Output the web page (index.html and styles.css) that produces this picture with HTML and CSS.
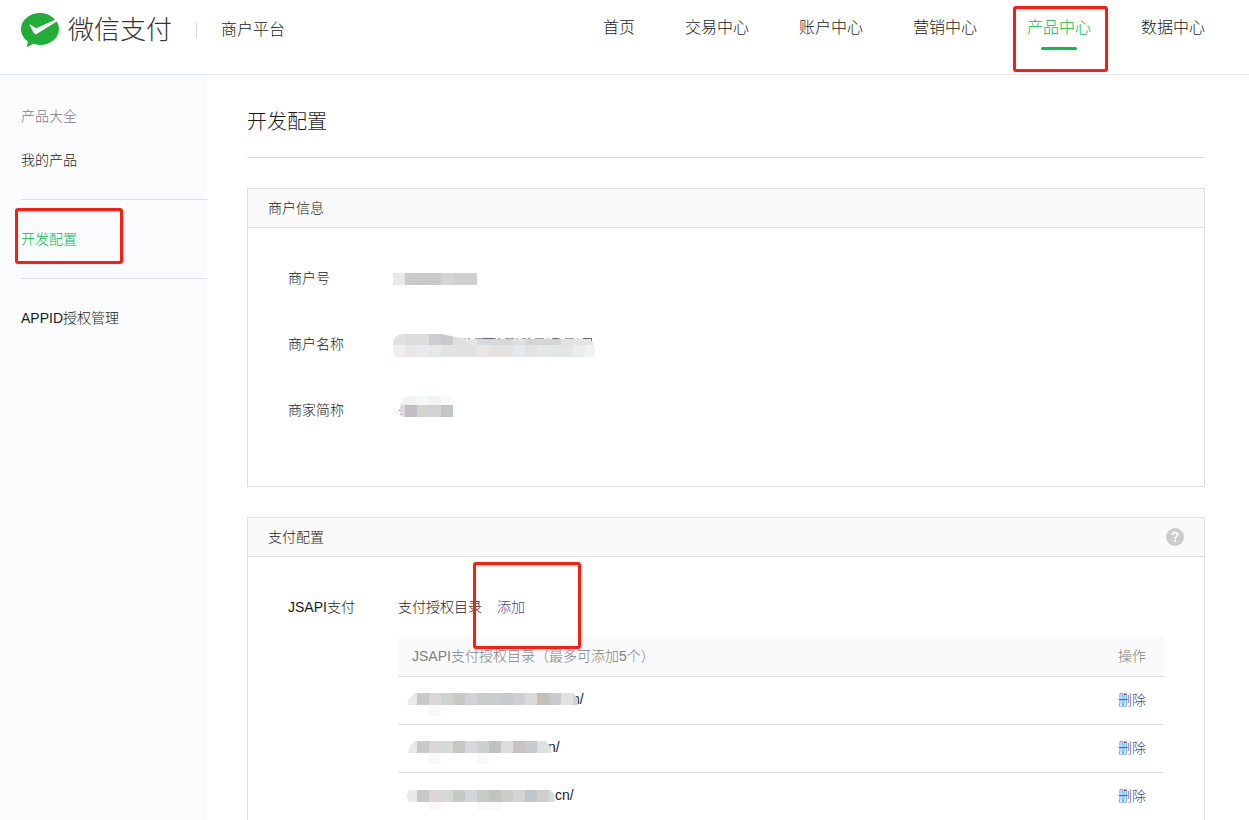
FILE: index.html
```html
<!DOCTYPE html>
<html lang="zh-CN">
<head>
    <meta charset="UTF-8">
    <meta name="viewport" content="width=device-width, initial-scale=1.0">
    <title>微信支付 - 商户平台</title>
    <link rel="stylesheet" href="styles.css">
</head>
<body>
    <header class="header">
        <div class="brand">
            <a class="logo" href="#">
                <svg class="logo-icon" width="38" height="34" viewBox="0 0 38 34" aria-hidden="true">
                    <path fill="#22ac38" d="M19 0C8.500 0 0 7.200 0 16c0 5 2.700 9.400 6.900 12.400L6 33.200c-.1.600.3.900.8.600l5.600-3c2.100.7 4.300 1.200 6.600 1.200 10.500 0 19-7.200 19-16 0-2.700-.8-5.200-2.200-7.400L15.600 21c-1.200.7-2 .3-2.600-.8L8.700 12.600c-.3-.8.3-1.300 1-.8l4.300 2.800c.8.500 1.400.6 2.200.2L34 6.800C30.500 2.700 25.100 0 19 0z"/>
                </svg>
                <span class="logo-text">微信支付</span>
            </a>
            <span class="brand-line"></span>
            <span class="brand-sub">商户平台</span>
        </div>
        <nav class="nav">
            <a href="#">首页</a>
            <a href="#">交易中心</a>
            <a href="#">账户中心</a>
            <a href="#">营销中心</a>
            <a class="active" href="#">产品中心<span class="mark mark-nav"></span></a>
            <a href="#">数据中心</a>
        </nav>
    </header>

    <div class="wrap">
        <aside class="sidebar">
            <div class="menu-group">
                <a class="muted" href="#">产品大全</a>
                <a href="#">我的产品</a>
            </div>
            <div class="menu-group">
                <a class="active" href="#">开发配置<span class="mark mark-menu"></span></a>
            </div>
            <div class="menu-group">
                <a href="#">APPID授权管理</a>
            </div>
        </aside>

        <main class="main">
            <h1>开发配置</h1>

            <section class="panel">
                <div class="panel-head">
                    <h2>商户信息</h2>
                </div>
                <dl class="info">
                    <div class="info-row">
                        <dt>商户号</dt>
                        <dd>
                            <svg class="mosaic" width="84" height="24" viewBox="0 0 84 24" aria-hidden="true">
                                <path fill="#e9eaeb" d="M0 7h12v12H0z"/>
                                <path fill="#cdcacb" d="M12 7h12v12H12z"/>
                                <path fill="#cbcacb" d="M24 7h12v12H24z"/>
                                <path fill="#cac8c7" d="M36 7h12v12H36z"/>
                                <path fill="#d2d4d5" d="M48 7h12v12H48z"/>
                                <path fill="#d0d0ce" d="M60 7h12v12H60z"/>
                                <path fill="#cfd0d1" d="M72 7h12v12H72z"/>
                            </svg>
                        </dd>
                    </div>
                    <div class="info-row">
                        <dt>商户名称</dt>
                        <dd>
                            <svg class="mosaic" width="202" height="24" viewBox="0 0 202 24" aria-hidden="true">
                                <clipPath id="name-shape">
                                    <path d="M10 2h38l20 4h122q12 0 12 14 0 5-5 5H5q-5 0-5-5V10Q2 2 10 2z"/>
                                </clipPath>
                                <path stroke="#a0a0a0" fill="none" stroke-dasharray="4 2 2 5 9 3 1 4" d="M69 6.500h120"/>
                                <path stroke="#666" fill="none" d="M90 6.500h11M160 6.500h5M190 6.500h9"/>
                                <path stroke="#3b86c4" fill="none" d="M198.500 6v5"/>
                                <g clip-path="url(#name-shape)">
                                    <path fill="#e2dfdf" d="M0 0h12v13H0z"/>
                                    <path fill="#dcdcdc" d="M12 0h24v13H12z"/>
                                    <path fill="#cdcfce" d="M36 0h12v13H36z"/>
                                    <path fill="#c9cacd" d="M48 0h12v13H48z"/>
                                    <path fill="#dfdfdf" d="M60 0h12v13H60z"/>
                                    <path fill="#eae5e2" d="M72 7h12v6H72z"/>
                                    <path fill="#d5dade" d="M84 7h24v6H84z"/>
                                    <path fill="#dad8d7" d="M108 7h12v6h-12z"/>
                                    <path fill="#dce1e5" d="M120 7h12v6h-12z"/>
                                    <path fill="#d5d5d6" d="M132 7h36v6h-36z"/>
                                    <path fill="#dee3e6" d="M168 7h12v6h-12z"/>
                                    <path fill="#e4e4e4" d="M180 7h22v6h-22z"/>
                                    <path fill="#f1eff1" d="M0 13h12v12H0z"/>
                                    <path fill="#e8e7e6" d="M12 13h12v12H12z"/>
                                    <path fill="#e8eaed" d="M24 13h12v12H24z"/>
                                    <path fill="#e5e8e4" d="M36 13h12v12H36z"/>
                                    <path fill="#e2e2e5" d="M48 13h36v12H48z"/>
                                    <path fill="#e7e7e8" d="M84 13h12v12H84z"/>
                                    <path fill="#e3e2e1" d="M96 13h24v12H96z"/>
                                    <path fill="#e3e9ee" d="M120 13h12v12h-12z"/>
                                    <path fill="#e4e3e4" d="M132 13h12v12h-12z"/>
                                    <path fill="#e7e7e8" d="M144 13h12v12h-12z"/>
                                    <path fill="#e4e6e5" d="M156 13h24v12h-24z"/>
                                    <path fill="#ececea" d="M180 13h12v12h-12z"/>
                                    <path fill="#eff1f4" d="M192 13h10v12h-10z"/>
                                </g>
                            </svg>
                        </dd>
                    </div>
                    <div class="info-row">
                        <dt>商家简称</dt>
                        <dd>
                            <svg class="mosaic" width="60" height="24" viewBox="0 0 60 24" aria-hidden="true">
                                <clipPath id="short-shape">
                                    <path d="M18-2h42v21H11q-4 0-4-6Q7-2 18-2z"/>
                                </clipPath>
                                <path fill="#777" d="M6 12h2v1H6zM7 16h2v1H7z"/>
                                <g clip-path="url(#short-shape)">
                                    <path fill="#f2f2f2" d="M6-2h18v9H6z"/>
                                    <path fill="#f6f8f7" d="M24-2h12v9H24z"/>
                                    <path fill="#f2f4f4" d="M36-2h12v9H36z"/>
                                    <path fill="#fbfbfb" d="M48-2h12v9H48z"/>
                                    <path fill="#dadada" d="M6 7h6v12H6z"/>
                                    <path fill="#c0bec4" d="M12 7h12v12H12z"/>
                                    <path fill="#d2d2d0" d="M24 7h24v12H24z"/>
                                    <path fill="#c4c5c5" d="M48 7h12v12H48z"/>
                                </g>
                            </svg>
                        </dd>
                    </div>
                </dl>
            </section>

            <section class="panel panel-open">
                <div class="panel-head">
                    <h2>支付配置</h2>
                    <button class="help" type="button" aria-label="帮助">
                        <svg width="18" height="18" viewBox="0 0 18 18" aria-hidden="true">
                            <circle cx="9" cy="9" r="9" fill="#ccc"/>
                            <path d="M6.300 7C6.300 5.400 7.400 4.500 9 4.500s2.700.9 2.700 2.300c0 1.900-2.700 2-2.700 4.200" fill="none" stroke="#fff" stroke-width="1.600"/>
                            <path fill="#fff" d="M8 12h2v2H8z"/>
                        </svg>
                    </button>
                </div>
                <div class="pay">
                    <div class="pay-label">JSAPI支付</div>
                    <div class="pay-content">
                        <div class="pay-title">
                            <span>支付授权目录</span>
                            <a class="add" href="#">添加<span class="mark mark-add"></span></a>
                        </div>
                        <table class="dirs">
                            <thead>
                                <tr>
                                    <th>JSAPI支付授权目录（最多可添加5个）</th>
                                    <th class="op">操作</th>
                                </tr>
                            </thead>
                            <tbody>
                                <tr>
                                    <td>
                                        <svg class="mosaic" width="165" height="24" viewBox="0 0 165 24" aria-hidden="true">
                                            <clipPath id="dir-1">
                                                <path d="M9 5h157l5 6v6H0Q2 8 9 5zM10 17h161v11H10z"/>
                                            </clipPath>
                                            <g clip-path="url(#dir-1)">
                                                <path fill="#e9e9e9" d="M0 5h10v12H0z"/>
                                                <path fill="#c8cac9" d="M10 5h12v12H10z"/>
                                                <path fill="#dad6da" d="M22 5h12v12H22z"/>
                                                <path fill="#cfd1d0" d="M34 5h12v12H34z"/>
                                                <path fill="#c8c7c6" d="M46 5h12v12H46z"/>
                                                <path fill="#d1d2d7" d="M58 5h12v12H58z"/>
                                                <path fill="#cacdc9" d="M70 5h12v12H70z"/>
                                                <path fill="#c9cdce" d="M82 5h12v12H82z"/>
                                                <path fill="#c8c9cc" d="M94 5h12v12H94z"/>
                                                <path fill="#cfcfd2" d="M106 5h12v12h-12z"/>
                                                <path fill="#dadada" d="M118 5h12v12h-12z"/>
                                                <path fill="#c4bfbb" d="M130 5h12v12h-12z"/>
                                                <path fill="#c9cacd" d="M142 5h12v12h-12z"/>
                                                <path fill="#e1e1e0" d="M154 5h12v12h-12z"/>
                                                <path fill="#cfd3d6" d="M166 5h5v12h-5z"/>
                                                <path fill="#f9f9fa" d="M22 17h12v11H22z"/>
                                            </g>
                                        </svg>n/
                                    </td>
                                    <td class="op"><a href="#">删除</a></td>
                                </tr>
                                <tr>
                                    <td>
                                        <svg class="mosaic" width="141" height="24" viewBox="0 0 141 24" aria-hidden="true">
                                            <clipPath id="dir-2">
                                                <path d="M9 5h130l5 6v6H1Q2 8 9 5zM10 17h134v11H10z"/>
                                            </clipPath>
                                            <g clip-path="url(#dir-2)">
                                                <path fill="#e9e9e9" d="M0 5h10v12H0z"/>
                                                <path fill="#c8cac9" d="M10 5h12v12H10z"/>
                                                <path fill="#dad6da" d="M22 5h12v12H22z"/>
                                                <path fill="#d6d9d5" d="M34 5h12v12H34z"/>
                                                <path fill="#c7c5c6" d="M46 5h12v12H46z"/>
                                                <path fill="#d6d7d9" d="M58 5h12v12H58z"/>
                                                <path fill="#ccd0cd" d="M70 5h12v12H70z"/>
                                                <path fill="#c0c2c1" d="M82 5h12v12H82z"/>
                                                <path fill="#dbdcdc" d="M94 5h12v12H94z"/>
                                                <path fill="#c6c4c2" d="M106 5h12v12h-12z"/>
                                                <path fill="#c9c9cb" d="M118 5h12v12h-12z"/>
                                                <path fill="#dee0e2" d="M130 5h14v12h-14z"/>
                                                <path fill="#f9f9fa" d="M22 17h12v11H22zM70 17h12v11H70z"/>
                                            </g>
                                        </svg>n/
                                    </td>
                                    <td class="op"><a href="#">删除</a></td>
                                </tr>
                                <tr>
                                    <td>
                                        <svg class="mosaic" width="148" height="24" viewBox="0 0 148 24" aria-hidden="true">
                                            <clipPath id="dir-3">
                                                <path d="M2 5h141l4 4 1 8H2q-4-6 0-12zM10 17h138v8H10z"/>
                                            </clipPath>
                                            <g clip-path="url(#dir-3)">
                                                <path fill="#e9e9e9" d="M0 5h10v12H0z"/>
                                                <path fill="#c8cac9" d="M10 5h12v12H10z"/>
                                                <path fill="#dad6da" d="M22 5h12v12H22z"/>
                                                <path fill="#d6d9d5" d="M34 5h12v12H34z"/>
                                                <path fill="#c9c8c8" d="M46 5h12v12H46z"/>
                                                <path fill="#d4d5d8" d="M58 5h12v12H58z"/>
                                                <path fill="#c8cac7" d="M70 5h12v12H70z"/>
                                                <path fill="#c2c4c3" d="M82 5h12v12H82z"/>
                                                <path fill="#cfcdcb" d="M94 5h12v12H94z"/>
                                                <path fill="#d5d6d4" d="M106 5h12v12h-12z"/>
                                                <path fill="#c0c5c8" d="M118 5h12v12h-12z"/>
                                                <path fill="#cfcecd" d="M130 5h12v12h-12z"/>
                                                <path fill="#d8d9d9" d="M142 5h6v12h-6z"/>
                                                <path fill="#f9f9fa" d="M22 17h12v8H22zM70 17h24v8H70z"/>
                                            </g>
                                        </svg>cn/
                                    </td>
                                    <td class="op"><a href="#">删除</a></td>
                                </tr>
                            </tbody>
                        </table>
                    </div>
                </div>
            </section>
        </main>
    </div>
</body>
</html>
```

FILE: styles.css
```css
* {
    box-sizing: border-box;
}

body {
    margin: 0;
    font-family: "Liberation Sans", "Noto Sans CJK SC", sans-serif;
    font-size: 14px;
    font-weight: 300;
    line-height: 24px;
    color: #1a1a1a;
    background-color: #fff;
}

a {
    color: #3a4a98;
    text-decoration: none;
}

h1,
h2,
dl,
dd {
    margin: 0;
    font-weight: inherit;
}

/* header */
.header {
    display: flex;
    justify-content: space-between;
    align-items: flex-start;
    height: 75px;
    padding: 0 44px 0 21px;
    border-bottom: 1px solid #e6e8ee;
}

.brand {
    display: flex;
    align-items: center;
    height: 60px;
    font-size: 16px;
}

.logo {
    display: flex;
    align-items: center;
    gap: 9px;
    color: #333;
}

.logo-text {
    font-size: 26px;
}

.brand-line {
    width: 1px;
    height: 16px;
    margin: 0 24px;
    background-color: #ddd;
}

.nav {
    display: flex;
    gap: 50px;
    font-size: 16px;
    line-height: 56px;
}

.nav a {
    position: relative;
    color: #1a1a1a;
}

.nav a.active,
.menu-group a.active {
    color: #00b850;
}

.nav a.active::after {
    content: "";
    position: absolute;
    left: 14px;
    top: 47px;
    width: 36px;
    height: 3px;
    border-radius: 2px;
    background-color: #00c250;
}

/* red boxes drawn over the page */
.mark {
    position: absolute;
    z-index: 2;
    border: 3px solid #ff1c10;
    border-radius: 3px;
    pointer-events: none;
}

.mark-nav {
    left: -14px;
    top: 6px;
    width: 95px;
    height: 66px;
}

.mark-menu {
    left: -6px;
    top: -9px;
    width: 108px;
    height: 56px;
}

.mark-add {
    left: -24px;
    top: -33px;
    width: 108px;
    height: 87px;
}

.wrap {
    display: flex;
    min-height: calc(100vh - 75px);
}

/* sidebar */
.sidebar {
    flex: none;
    width: 207px;
    padding-left: 21px;
    background-color: #fafbfd;
}

.menu-group {
    padding: 17px 0;
    border-bottom: 1px solid #dedfe2;
}

.menu-group:first-child {
    padding-top: 19px;
}

.menu-group:last-child {
    border-bottom: 0;
}

.menu-group a {
    display: block;
    position: relative;
    line-height: 44px;
    color: #1a1a1a;
}

.menu-group a.muted {
    color: #808080;
}

/* content */
.main {
    flex: 1;
    padding: 0 44px 0 40px;
}

h1 {
    padding: 27px 0 15px;
    border-bottom: 1px solid #dedfe0;
    font-size: 20px;
    line-height: 40px;
}

.panel {
    margin-top: 30px;
    border: 1px solid #dedfe0;
}

.panel-open {
    border-bottom: 0;
}

.panel-head {
    display: flex;
    justify-content: space-between;
    align-items: center;
    height: 39px;
    padding: 0 20px;
    border-bottom: 1px solid #dedfe0;
    background-color: #fafafa;
}

h2 {
    font-size: 14px;
}

.help {
    display: flex;
    padding: 0;
    border: 0;
    background: none;
    cursor: pointer;
}

.info {
    padding: 17px 40px 43px;
}

.info-row {
    display: flex;
    align-items: center;
    height: 66px;
}

.info-row dt,
.pay-label {
    flex: none;
    width: 110px;
}

.info-row dd {
    display: flex;
}

.mosaic {
    position: relative;
    margin-left: -5px;
    overflow: visible;
    vertical-align: middle;
    shape-rendering: crispEdges;
}

.pay {
    display: flex;
    padding: 38px 40px 0;
}

.pay-content {
    flex: 1;
}

.pay-title {
    display: flex;
    gap: 15px;
    margin-bottom: 18px;
}

.add {
    position: relative;
}

.dirs {
    width: 100%;
    border-spacing: 0;
}

.dirs th,
.dirs td {
    height: 48px;
    padding: 0 14px 2px;
    border-bottom: 1px solid #dedfe0;
    font-weight: inherit;
    text-align: left;
}

.dirs th {
    height: 40px;
    background-color: #fafafa;
    color: #808080;
}

.dirs tbody tr:last-child td {
    border-bottom: 0;
}

.dirs .op {
    width: 60px;
    padding-right: 16px;
    white-space: nowrap;
}
```
